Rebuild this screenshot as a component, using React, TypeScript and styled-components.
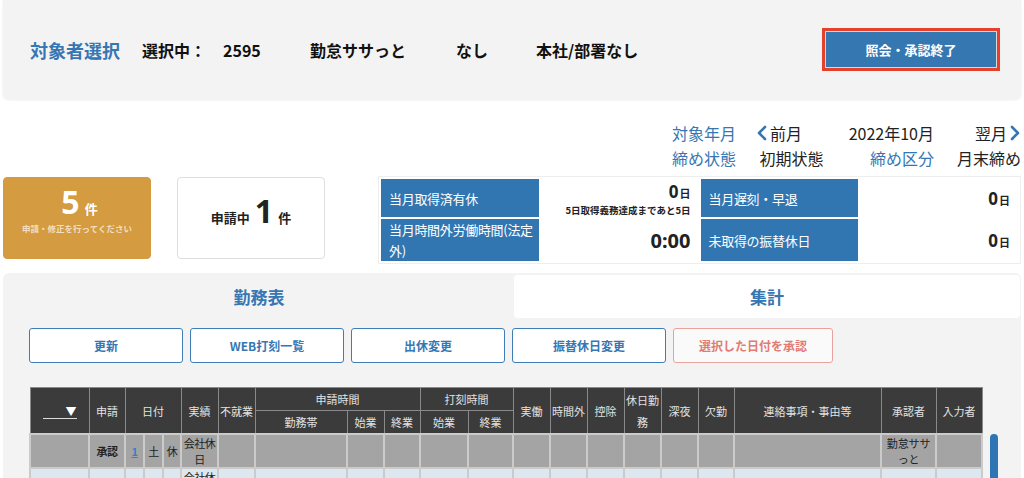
import React from 'react';
import styled, { createGlobalStyle } from 'styled-components';

const GlobalStyle = createGlobalStyle`
  html, body {
    margin: 0;
    padding: 0;
    background: #fff;
    overflow: hidden;
  }
  body {
    font-family: "Noto Sans CJK JP", "Noto Sans", sans-serif;
    color: #222;
  }
`;

const BLUE = '#3677b3';

const Page = styled.div`
  width: 1018px;
  padding: 0 3px;
`;

/* ---------- top panel ---------- */

const HeaderPanel = styled.div`
  display: flex;
  align-items: center;
  height: 99px;
  box-sizing: border-box;
  padding: 0 21px 0 27px;
  background: #f3f3f3;
  border-radius: 0 0 6px 6px;
  box-shadow: 0 1px 3px rgba(0, 0, 0, 0.08);
`;

const PanelTitle = styled.h1`
  margin: 0 22px 0 0;
  font-size: 18px;
  font-weight: 700;
  color: ${BLUE};
  white-space: nowrap;
`;

const InfoItem = styled.span<{ $w?: number }>`
  width: ${p => (p.$w ? `${p.$w}px` : 'auto')};
  font-size: 16px;
  font-weight: 700;
  color: #111;
  white-space: nowrap;
`;

const FinishButton = styled.button`
  margin-left: auto;
  width: 178px;
  height: 43px;
  border: 3px solid #e5402c;
  padding: 0;
  background: #3577b1;
  box-shadow: inset 0 0 0 1px #d9d9d9;
  color: #fff;
  font-family: inherit;
  font-size: 13px;
  font-weight: 700;
`;

/* ---------- period rows ---------- */

const PeriodGrid = styled.div`
  display: grid;
  grid-template-columns: 65px 69px 89px 67px;
  grid-auto-rows: 25px;
  column-gap: 20px;
  justify-content: end;
  align-items: center;
  margin-top: 21px;
  font-size: 16px;
  white-space: nowrap;
`;

const PeriodCell = styled.div<{ $blue?: boolean; $align?: 'left' | 'right' }>`
  color: ${p => (p.$blue ? BLUE : '#222')};
  display: flex;
  align-items: center;
  justify-content: ${p => (p.$align === 'right' ? 'flex-end' : 'flex-start')};
  gap: 2px;
`;

const Chevron = ({ dir }: { dir: 'left' | 'right' }) => (
  <svg width="12" height="16" viewBox="0 0 12 16">
    <polyline
      points={dir === 'left' ? '9,2 3,8 9,14' : '3,2 9,8 3,14'}
      fill="none"
      stroke={BLUE}
      strokeWidth="2.6"
      strokeLinecap="round"
      strokeLinejoin="round"
    />
  </svg>
);

/* ---------- stats ---------- */

const StatsRow = styled.div`
  display: flex;
  align-items: stretch;
  margin-top: 7px;
  height: 82px;
`;

const CountCard = styled.div<{ $alert?: boolean }>`
  flex: 0 0 148px;
  box-sizing: border-box;
  display: flex;
  flex-direction: column;
  align-items: center;
  justify-content: center;
  padding-bottom: ${p => (p.$alert ? '18px' : '14px')};
  border-radius: 4px;
  background: ${p => (p.$alert ? '#d49b40' : '#fff')};
  border: 1px solid ${p => (p.$alert ? '#d49b40' : '#dedede')};
  color: ${p => (p.$alert ? '#fff' : '#222')};
  & + & {
    margin-left: 26px;
  }
`;

const CountLine = styled.div`
  display: flex;
  align-items: baseline;
  font-weight: 700;
  white-space: nowrap;
`;

const CountNum = styled.span`
  font-size: 32px;
  line-height: 36px;
  font-family: "Noto Sans", "Noto Sans CJK JP", sans-serif;
  margin: 0 5px;
`;

const CountUnit = styled.span`
  font-size: 13px;
`;

const CountNote = styled.div`
  margin-top: 2px;
  font-size: 8.5px;
  font-weight: 700;
  color: #f3dfbd;
  white-space: nowrap;
`;

const StatsTable = styled.table`
  flex: 1;
  margin-left: 53px;
  margin-top: -1px;
  border: 1px solid #eee;
  border-spacing: 2px;
  table-layout: fixed;
  height: 84px;
`;

const StatLabel = styled.td`
  width: 25%;
  padding: 0 4px 0 8px;
  background: #3276b1;
  color: #fff;
  font-size: 13px;
  line-height: 21px;
  letter-spacing: -0.3px;
`;

const StatValue = styled.td`
  width: 25%;
  padding: 0 8px 0 4px;
  text-align: right;
  vertical-align: middle;
`;

const BigVal = styled.span<{ $size?: number }>`
  font-size: ${p => p.$size || 17}px;
  font-weight: 700;
  font-family: "Noto Sans", "Noto Sans CJK JP", sans-serif;
`;

const ValUnit = styled.span`
  font-size: 11px;
  font-weight: 700;
  margin-left: 1px;
`;

const ValNote = styled.div`
  font-size: 9.5px;
  font-weight: 700;
  line-height: 14px;
`;

/* ---------- tab panel ---------- */

const TabPanel = styled.div`
  margin-top: 14px;
  padding: 2px 1px 0;
  background: #f3f3f3;
  border-radius: 6px 6px 0 0;
  height: 220px;
`;

const TabBar = styled.div`
  display: grid;
  grid-template-columns: 510px 1fr;
  height: 43px;
`;

const Tab = styled.div<{ $active?: boolean }>`
  display: flex;
  align-items: center;
  justify-content: center;
  border-radius: 4px;
  background: ${p => (p.$active ? 'transparent' : '#fff')};
  color: ${BLUE};
  font-size: 17px;
  font-weight: 700;
`;

const ActionRow = styled.div`
  display: flex;
  gap: 7px;
  padding: 10px 0 0 25px;
`;

const ActionButton = styled.button<{ $danger?: boolean; $w?: number }>`
  width: ${p => p.$w || 154}px;
  height: 35px;
  border-radius: 3px;
  border: 1px solid ${p => (p.$danger ? '#e9a39c' : '#3f7db6')};
  background: ${p => (p.$danger ? '#fafafa' : '#fff')};
  color: ${p => (p.$danger ? '#e27b72' : BLUE)};
  font-family: inherit;
  font-size: 12px;
  font-weight: 700;
  padding: 0;
`;

const TableArea = styled.div`
  display: flex;
  align-items: flex-start;
  margin: 24px 0 0 25px;
`;

const WorkTable = styled.table`
  width: 952px;
  table-layout: fixed;
  border-collapse: collapse;
  font-size: 11px;
  text-align: center;
`;

const Th = styled.th`
  background: #3b3b3b;
  color: #e2e2e2;
  font-weight: 400;
  border: 1px solid #8a8a8a;
  height: 22px;
  padding: 0;
  line-height: 22px;
`;

const Td = styled.td<{ $row: 'holiday' | 'blue' }>`
  background: ${p => (p.$row === 'holiday' ? '#a4a4a4' : '#dde7f0')};
  border: 2px solid #cbcbcb;
  height: 31px;
  padding: 0;
  line-height: 16px;
  letter-spacing: -0.4px;
  color: #222;
`;

const NameText = styled.span`
  letter-spacing: -0.15px;
`;

const SelectMock = styled.span`
  display: inline-block;
  width: 34px;
  border-bottom: 1px solid #ddd;
  text-align: right;
  font-size: 11px;
  line-height: 13px;
  color: #fff;
`;

const StrongCell = styled.span`
  font-weight: 700;
`;

const DayLink = styled.span`
  color: #3a7fc1;
  font-weight: 700;
  text-decoration: underline;
`;

const ScrollTrack = styled.div`
  margin-left: 7px;
  padding-top: 47px;
`;

const ScrollThumb = styled.div`
  width: 8px;
  height: 160px;
  border-radius: 4px;
  background: #2f74b5;
`;

const colWidths = [59, 36, 19, 19, 18, 37, 37, 92, 37, 36, 48, 45, 37, 37, 37, 37, 37, 36, 147, 55, 46];

const singleHeads = ['実働', '時間外', '控除', '休日勤務', '深夜', '欠勤', '連絡事項・事由等', '承認者', '入力者'];

type RowData = {
  kind: 'holiday' | 'blue';
  status: string;
  day: string;
  dow: string;
  type: string;
  result: string;
  approver: string;
};

const rows: RowData[] = [
  { kind: 'holiday', status: '承認', day: '1', dow: '土', type: '休', result: '会社休日', approver: '勤怠ササっと' },
  { kind: 'blue', status: '', day: '2', dow: '日', type: '休', result: '会社休日', approver: '' },
];

export default function App() {
  return (
    <Page>
      <GlobalStyle />
      <HeaderPanel>
        <PanelTitle>対象者選択</PanelTitle>
        <InfoItem $w={81}>選択中：</InfoItem>
        <InfoItem $w={87}>2595</InfoItem>
        <InfoItem $w={146}>勤怠ササっと</InfoItem>
        <InfoItem $w={80}>なし</InfoItem>
        <InfoItem>本社/部署なし</InfoItem>
        <FinishButton>照会・承認終了</FinishButton>
      </HeaderPanel>

      <PeriodGrid>
        <PeriodCell $blue $align="right">対象年月</PeriodCell>
        <PeriodCell><Chevron dir="left" />前月</PeriodCell>
        <PeriodCell $align="right">2022年10月</PeriodCell>
        <PeriodCell $align="right">翌月<Chevron dir="right" /></PeriodCell>
        <PeriodCell $blue $align="right">締め状態</PeriodCell>
        <PeriodCell>&nbsp;初期状態</PeriodCell>
        <PeriodCell $blue $align="right">締め区分</PeriodCell>
        <PeriodCell $align="right">月末締め</PeriodCell>
      </PeriodGrid>

      <StatsRow>
        <CountCard $alert>
          <CountLine>
            <CountNum>5</CountNum>
            <CountUnit>件</CountUnit>
          </CountLine>
          <CountNote>申請・修正を行ってください</CountNote>
        </CountCard>
        <CountCard>
          <CountLine>
            <CountUnit>申請中</CountUnit>
            <CountNum>1</CountNum>
            <CountUnit>件</CountUnit>
          </CountLine>
        </CountCard>
        <StatsTable>
          <tbody>
            <tr>
              <StatLabel>当月取得済有休</StatLabel>
              <StatValue>
                <div><BigVal>0</BigVal><ValUnit>日</ValUnit></div>
                <ValNote>5日取得義務達成まであと5日</ValNote>
              </StatValue>
              <StatLabel>当月遅刻・早退</StatLabel>
              <StatValue><BigVal>0</BigVal><ValUnit>日</ValUnit></StatValue>
            </tr>
            <tr>
              <StatLabel>当月時間外労働時間(法定外)</StatLabel>
              <StatValue><BigVal $size={20}>0:00</BigVal></StatValue>
              <StatLabel>未取得の振替休日</StatLabel>
              <StatValue><BigVal>0</BigVal><ValUnit>日</ValUnit></StatValue>
            </tr>
          </tbody>
        </StatsTable>
      </StatsRow>

      <TabPanel>
        <TabBar>
          <Tab $active>勤務表</Tab>
          <Tab>集計</Tab>
        </TabBar>

        <ActionRow>
          <ActionButton>更新</ActionButton>
          <ActionButton>WEB打刻一覧</ActionButton>
          <ActionButton>出休変更</ActionButton>
          <ActionButton>振替休日変更</ActionButton>
          <ActionButton $danger $w={160}>選択した日付を承認</ActionButton>
        </ActionRow>

        <TableArea>
          <WorkTable>
            <colgroup>
              {colWidths.map((w, i) => (
                <col key={i} style={{ width: w }} />
              ))}
            </colgroup>
            <thead>
              <tr>
                <Th rowSpan={2}><SelectMock>▼</SelectMock></Th>
                <Th rowSpan={2}>申請</Th>
                <Th rowSpan={2} colSpan={3}>日付</Th>
                <Th rowSpan={2}>実績</Th>
                <Th rowSpan={2}>不就業</Th>
                <Th colSpan={3}>申請時間</Th>
                <Th colSpan={2}>打刻時間</Th>
                {singleHeads.map(h => (
                  <Th key={h} rowSpan={2}>{h}</Th>
                ))}
              </tr>
              <tr>
                <Th>勤務帯</Th>
                <Th>始業</Th>
                <Th>終業</Th>
                <Th>始業</Th>
                <Th>終業</Th>
              </tr>
            </thead>
            <tbody>
              {rows.map(r => (
                <tr key={r.day}>
                  <Td $row={r.kind} />
                  <Td $row={r.kind}><StrongCell>{r.status}</StrongCell></Td>
                  <Td $row={r.kind}><DayLink>{r.day}</DayLink></Td>
                  <Td $row={r.kind}>{r.dow}</Td>
                  <Td $row={r.kind}>{r.type}</Td>
                  <Td $row={r.kind}>{r.result}</Td>
                  {Array.from({ length: 13 }).map((_, i) => (
                    <Td key={i} $row={r.kind} />
                  ))}
                  <Td $row={r.kind}><NameText>{r.approver}</NameText></Td>
                  <Td $row={r.kind} />
                </tr>
              ))}
            </tbody>
          </WorkTable>
          <ScrollTrack>
            <ScrollThumb />
          </ScrollTrack>
        </TableArea>
      </TabPanel>
    </Page>
  );
}
